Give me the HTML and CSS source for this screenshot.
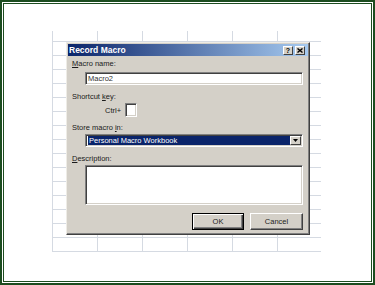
FILE: index.html
```html
<!DOCTYPE html>
<html lang="en">
<head>
<meta charset="UTF-8">
<meta name="viewport" content="width=device-width, initial-scale=1.0">
<title>Record Macro</title>
<link rel="stylesheet" href="styles.css">
</head>
<body>

<div class="frame">
  <div class="inner">
    <div class="sheet">

      <div class="dialog">
        <div class="titlebar">
          <span class="title">Record Macro</span>
          <div class="title-buttons">
            <span class="tbtn help">?</span>
            <span class="tbtn">
              <svg width="6" height="5" viewBox="0 0 6 5"><path d="M0.5 0.5 L5.5 4.5 M5.5 0.5 L0.5 4.5" stroke="#000" stroke-width="1.4"/></svg>
            </span>
          </div>
        </div>

        <div class="dialog-body">
          <div class="label first"><u>M</u>acro name:</div>
          <div class="field text-field">Macro2</div>

          <div class="label gap-7">Shortcut <u>k</u>ey:</div>
          <div class="shortcut">
            <span>Ctrl+</span>
            <div class="field key-field"></div>
          </div>

          <div class="label gap-6">Store macro <u>i</u>n:</div>
          <div class="field select-field">
            <span class="selected">Personal Macro Workbook</span>
            <span class="drop-btn">
              <svg width="5" height="3" viewBox="0 0 5 3"><path d="M0 0 H5 L2.5 3 Z" fill="#000"/></svg>
            </span>
          </div>

          <div class="label gap-7"><u>D</u>escription:</div>
          <div class="field desc-field"></div>

          <div class="actions">
            <button class="btn default">OK</button>
            <button class="btn">Cancel</button>
          </div>
        </div>
      </div>

    </div>
  </div>
</div>

</body>
</html>
```

FILE: styles.css
```css
/* General styles */
body {
  margin: 0;
  padding: 0;
  font-family: "Liberation Sans", Arial, sans-serif;
  background-color: #fff;
}

.frame {
  width: 375px;
  height: 285px;
  box-sizing: border-box;
  border: 2px solid #1d4d20;
  padding: 1px;
  background-color: #fff;
}

.inner {
  height: 100%;
  box-sizing: border-box;
  border: 1px solid #1d4d20;
  padding: 27px 0 0 48px;
}

/* Spreadsheet grid behind the dialog */
.sheet {
  position: relative;
  width: 269px;
  height: 221px;
  background-image:
    linear-gradient(to right, #d5dae2 1px, transparent 1px),
    linear-gradient(to bottom, #d5dae2 1px, transparent 1px);
  background-size: 45px 100%, 100% 14px;
  background-position: 0 0, 0 10px;
}

/* Dialog window */
.dialog {
  position: absolute;
  left: 14px;
  top: 11px;
  width: 244px;
  box-sizing: border-box;
  padding: 1px;
  background-color: #d4d0c8;
  border: 1px solid;
  border-color: #eeece6 #404040 #404040 #eeece6;
  box-shadow: inset -1px -1px 0 #808080;
}

.titlebar {
  display: flex;
  align-items: center;
  justify-content: space-between;
  height: 12px;
  padding: 0 3px 0 1px;
  background: linear-gradient(to right, #0a246a, #a6caf0);
}

.title {
  color: #fff;
  font-size: 8.5px;
  font-weight: bold;
  line-height: 12px;
}

.title-buttons {
  display: flex;
  gap: 2px;
}

.tbtn {
  display: flex;
  align-items: center;
  justify-content: center;
  width: 10px;
  height: 9px;
  box-sizing: border-box;
  background-color: #d4d0c8;
  border: 1px solid;
  border-color: #fff #404040 #404040 #fff;
  font-size: 7px;
  font-weight: bold;
  line-height: 7px;
  color: #000;
}

/* Form contents */
.dialog-body {
  padding: 0 5px 3px 4px;
  color: #1a1a1a;
  font-size: 7.5px;
}

.label {
  line-height: 10px;
}

.label.first {
  margin-top: 3px;
}

.gap-7 {
  margin-top: 7px;
}

.gap-6 {
  margin-top: 6px;
}

.field {
  box-sizing: border-box;
  margin-left: 13px;
  background-color: #fff;
  border: 1px solid;
  border-color: #808080 #fff #fff #808080;
  box-shadow: inset 1px 1px 0 #404040, inset -1px -1px 0 #d4d0c8;
}

.text-field {
  margin-top: 3px;
  height: 13px;
  padding-left: 2px;
  line-height: 11px;
  color: #333;
}

.shortcut {
  display: flex;
  align-items: center;
  gap: 4px;
  margin-top: 1px;
  padding-left: 33px;
  height: 14px;
}

.shortcut .key-field {
  margin-left: 0;
  width: 12px;
  height: 14px;
}

.select-field {
  display: flex;
  margin-top: 1px;
  height: 13px;
  padding: 1px 1px 1px 2px;
}

.selected {
  flex: 1;
  background-color: #0a246a;
  color: #fff;
  line-height: 9px;
  padding-left: 1px;
}

.drop-btn {
  display: flex;
  align-items: center;
  justify-content: center;
  width: 11px;
  box-sizing: border-box;
  background-color: #d4d0c8;
  border: 1px solid;
  border-color: #fff #404040 #404040 #fff;
}

.desc-field {
  margin-top: 1px;
  height: 40px;
}

.actions {
  display: flex;
  justify-content: flex-end;
  gap: 6px;
  margin-top: 8px;
}

.btn {
  width: 53px;
  height: 17px;
  padding: 0;
  box-sizing: border-box;
  font-family: inherit;
  font-size: 7.5px;
  color: #222;
  background-color: #d4d0c8;
  border: 1px solid;
  border-color: #fff #404040 #404040 #fff;
  box-shadow: inset -1px -1px 0 #808080;
}

.btn.default {
  width: 52px;
  border-color: #000;
  box-shadow: inset 1px 1px 0 #fff, inset -1px -1px 0 #404040, inset -2px -2px 0 #808080;
}
```
